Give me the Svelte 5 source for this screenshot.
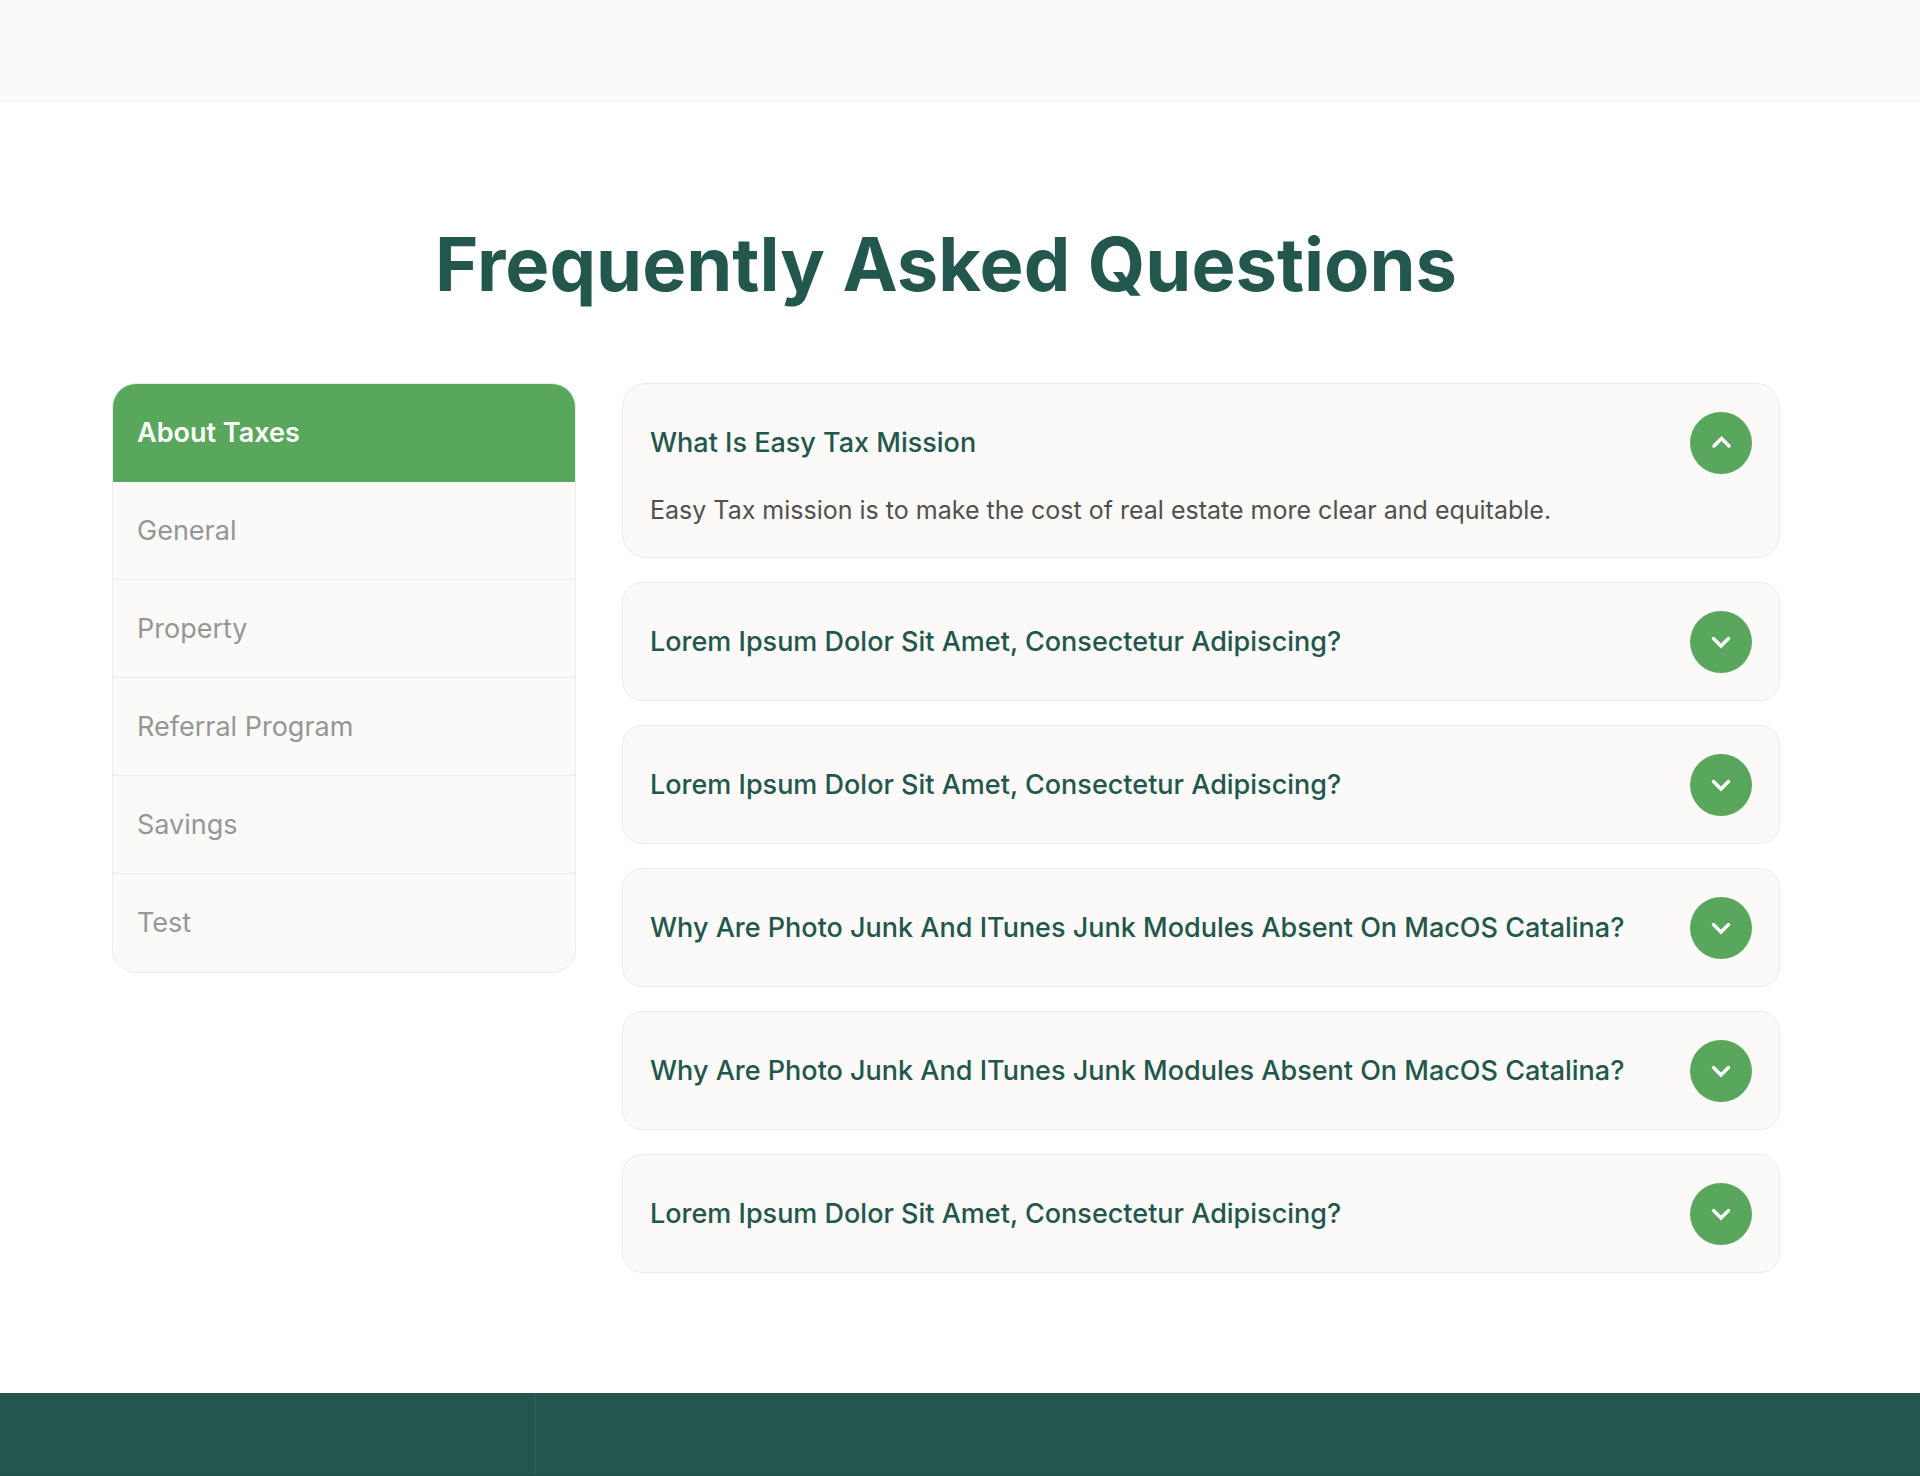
<script>
  const categories = ['About Taxes', 'General', 'Property', 'Referral Program', 'Savings', 'Test'];

  const questions = [
    {
      title: 'What Is Easy Tax Mission',
      answer: 'Easy Tax mission is to make the cost of real estate more clear and equitable.'
    },
    { title: 'Lorem Ipsum Dolor Sit Amet, Consectetur Adipiscing?', answer: '' },
    { title: 'Lorem Ipsum Dolor Sit Amet, Consectetur Adipiscing?', answer: '' },
    { title: 'Why Are Photo Junk And ITunes Junk Modules Absent On MacOS Catalina?', answer: '' },
    { title: 'Why Are Photo Junk And ITunes Junk Modules Absent On MacOS Catalina?', answer: '' },
    { title: 'Lorem Ipsum Dolor Sit Amet, Consectetur Adipiscing?', answer: '' }
  ];

  let category = $state(0);
  let opened = $state(0);
</script>

<div class="page">
  <div class="band"></div>

  <main class="faq">
    <h1>Frequently Asked Questions</h1>

    <div class="columns">
      <nav class="categories" aria-label="Question categories">
        {#each categories as name, i}
          <button
            type="button"
            class="category"
            class:active={category === i}
            aria-pressed={category === i}
            onclick={() => (category = i)}>{name}</button>
        {/each}
      </nav>

      <div class="questions">
        {#each questions as question, i}
          <article class="card" class:open={opened === i}>
            <h2>
              <button
                type="button"
                class="question"
                aria-expanded={opened === i}
                onclick={() => (opened = opened === i ? -1 : i)}>
                <span class="title">{question.title}</span>
                <span class="toggle">
                  <svg viewBox="0 0 24 24" aria-hidden="true">
                    {#if opened === i}
                      <path d="M5 15 L12.5 7.5 L20 15" />
                    {:else}
                      <path d="M4.5 8.5 L12 16 L19.5 8.5" />
                    {/if}
                  </svg>
                </span>
              </button>
            </h2>
            {#if opened === i && question.answer}
              <p class="answer">{question.answer}</p>
            {/if}
          </article>
        {/each}
      </div>
    </div>
  </main>

  <footer class="footer">
    <div class="footer-side"></div>
    <div class="footer-main"></div>
  </footer>
</div>

<style>
  .page {
    display: flex;
    flex-direction: column;
    min-height: 100vh;
    background: #fff;
    font-family: Inter, 'Liberation Sans', sans-serif;
  }

  .band {
    height: 103px;
    background: #fbfaf8;
  }

  .faq {
    padding: 116px 140px 120px 112px;
  }

  h1 {
    margin: 0 0 74px;
    color: #23574d;
    font-size: 74px;
    font-weight: 700;
    line-height: 90px;
    text-align: center;
  }

  .columns {
    display: grid;
    grid-template-columns: 464fr 1158fr;
    gap: 46px;
    align-items: start;
  }

  .categories {
    display: flex;
    flex-direction: column;
    overflow: hidden;
    border: 1px solid #ebebeb;
    border-radius: 24px;
    background: #fbfaf8;
  }

  .category {
    padding: 32px 24px;
    border: 0;
    border-bottom: 1px solid #ebebeb;
    background: none;
    color: #969696;
    font: 400 27px/33px Inter, 'Liberation Sans', sans-serif;
    text-align: left;
    cursor: pointer;
  }

  .category:last-child {
    border-bottom-color: transparent;
  }

  .category.active {
    border-bottom-color: #59a75c;
    background: #59a75c;
    color: #fff;
    font-weight: 600;
  }

  .questions {
    display: flex;
    flex-direction: column;
    gap: 24px;
  }

  .card {
    padding: 28px 27px 27px;
    border: 1px solid #ebebeb;
    border-radius: 20px;
    background: #fbfaf8;
  }

  .card.open {
    border-radius: 24px;
  }

  h2 {
    margin: 0;
  }

  .question {
    display: flex;
    align-items: center;
    justify-content: space-between;
    gap: 24px;
    width: 100%;
    padding: 0;
    border: 0;
    background: none;
    color: #23574d;
    font: 500 27px/34px Inter, 'Liberation Sans', sans-serif;
    text-align: left;
    cursor: pointer;
  }

  .toggle {
    display: flex;
    flex: none;
    align-items: center;
    justify-content: center;
    width: 62px;
    height: 62px;
    border-radius: 50%;
    background: #59a75c;
  }

  .toggle svg {
    width: 24px;
    height: 24px;
    fill: none;
    stroke: #fff;
    stroke-width: 3.4;
    stroke-linecap: round;
  }

  .answer {
    margin: 18px 0 2px;
    color: #505050;
    font-size: 25px;
    line-height: 36px;
  }

  .footer {
    display: grid;
    flex: 1;
    grid-template-columns: 536fr 1384fr;
    min-height: 80px;
    border-bottom: 1px solid #1f5047;
    background: #23574d;
  }

  .footer-side {
    border-right: 2px solid #2a5d50;
  }
</style>
